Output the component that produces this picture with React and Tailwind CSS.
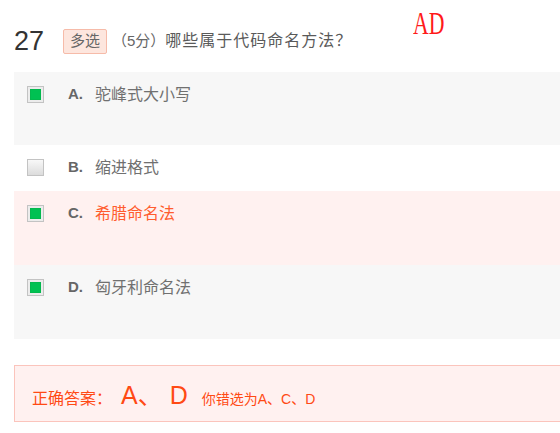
import React from "react";

const cx = (...xs) => xs.filter(Boolean).join(" ");

const options = [
  { key: "A", text: "驼峰式大小写", checked: true, tone: "gray", h: "h-[73px]" },
  { key: "B", text: "缩进格式", checked: false, tone: "white", h: "h-[46px]" },
  { key: "C", text: "希腊命名法", checked: true, tone: "wrong", h: "h-[74px]" },
  { key: "D", text: "匈牙利命名法", checked: true, tone: "gray", h: "h-[74px]" },
];

function Box({ checked }) {
  return (
    <div
      className={cx(
        "w-[17px] h-[17px] border border-[#c3c3c3] p-[2px] shrink-0",
        checked ? "bg-[#ececec]" : "bg-gradient-to-b from-[#f8f8f8] to-[#dcdcdc]"
      )}
    >
      {checked && <div className="w-full h-full bg-[#00c152] border border-[#03b84d]" />}
    </div>
  );
}

function Option({ opt }) {
  const bg =
    opt.tone === "gray" ? "bg-[#f7f7f7]" : opt.tone === "wrong" ? "bg-[#fff1f0]" : "bg-white";
  return (
    <div className={cx("flex items-start pl-[13px] pt-[14px]", bg, opt.h)}>
      <div className="flex items-center h-[17px]">
        <Box checked={opt.checked} />
        <span className="ml-[24px] w-[27px] text-[15px] font-bold text-[#666]">{opt.key}.</span>
        <span
          className={cx(
            "text-[16px]",
            opt.tone === "wrong" ? "text-[#ff5c2e]" : "text-[#707070]"
          )}
        >
          {opt.text}
        </span>
      </div>
    </div>
  );
}

export default function App() {
  return (
    <div
      className="relative w-[560px] h-[433px] bg-white overflow-hidden pl-[14px]"
      style={{ fontFamily: '"Liberation Sans", "Noto Sans CJK SC", sans-serif' }}
    >
      {/* marker */}
      <div
        className="absolute left-[413px] top-[7px] text-[32px] text-[#ff1a1a] leading-none scale-x-[0.68] origin-left"
        style={{ fontFamily: '"Liberation Serif", serif' }}
      >
        AD
      </div>

      {/* header */}
      <div className="flex items-center h-[72px] pt-[10px]">
        <span className="text-[27px] text-[#333] w-[49px] leading-none">27</span>
        <span className="h-[25px] px-[6px] flex items-center text-[15px] text-[#666] bg-[#fde6de] border border-[#f6bba9] rounded-[2px]">
          多选
        </span>
        <span className="ml-[5px] text-[15px] text-[#666]">（5分）</span>
        <span className="text-[16px] tracking-[1px] text-[#5a5a5a]">哪些属于代码命名方法？</span>
      </div>

      {/* options */}
      <div className="flex flex-col">
        {options.map((o) => (
          <Option key={o.key} opt={o} />
        ))}
      </div>

      {/* answer */}
      <div className="mt-[26px] w-[560px] h-[57px] border border-[#fbc4bc] bg-[#fff1f0] flex items-baseline pl-[17px] pt-[17px] text-[#ff4a14]">
        <span className="text-[16px]">正确答案：</span>
        <span className="ml-[9px] text-[25px] leading-none">A、 D</span>
        <span className="ml-[14px] text-[14px]">你错选为A、C、D</span>
      </div>
    </div>
  );
}
